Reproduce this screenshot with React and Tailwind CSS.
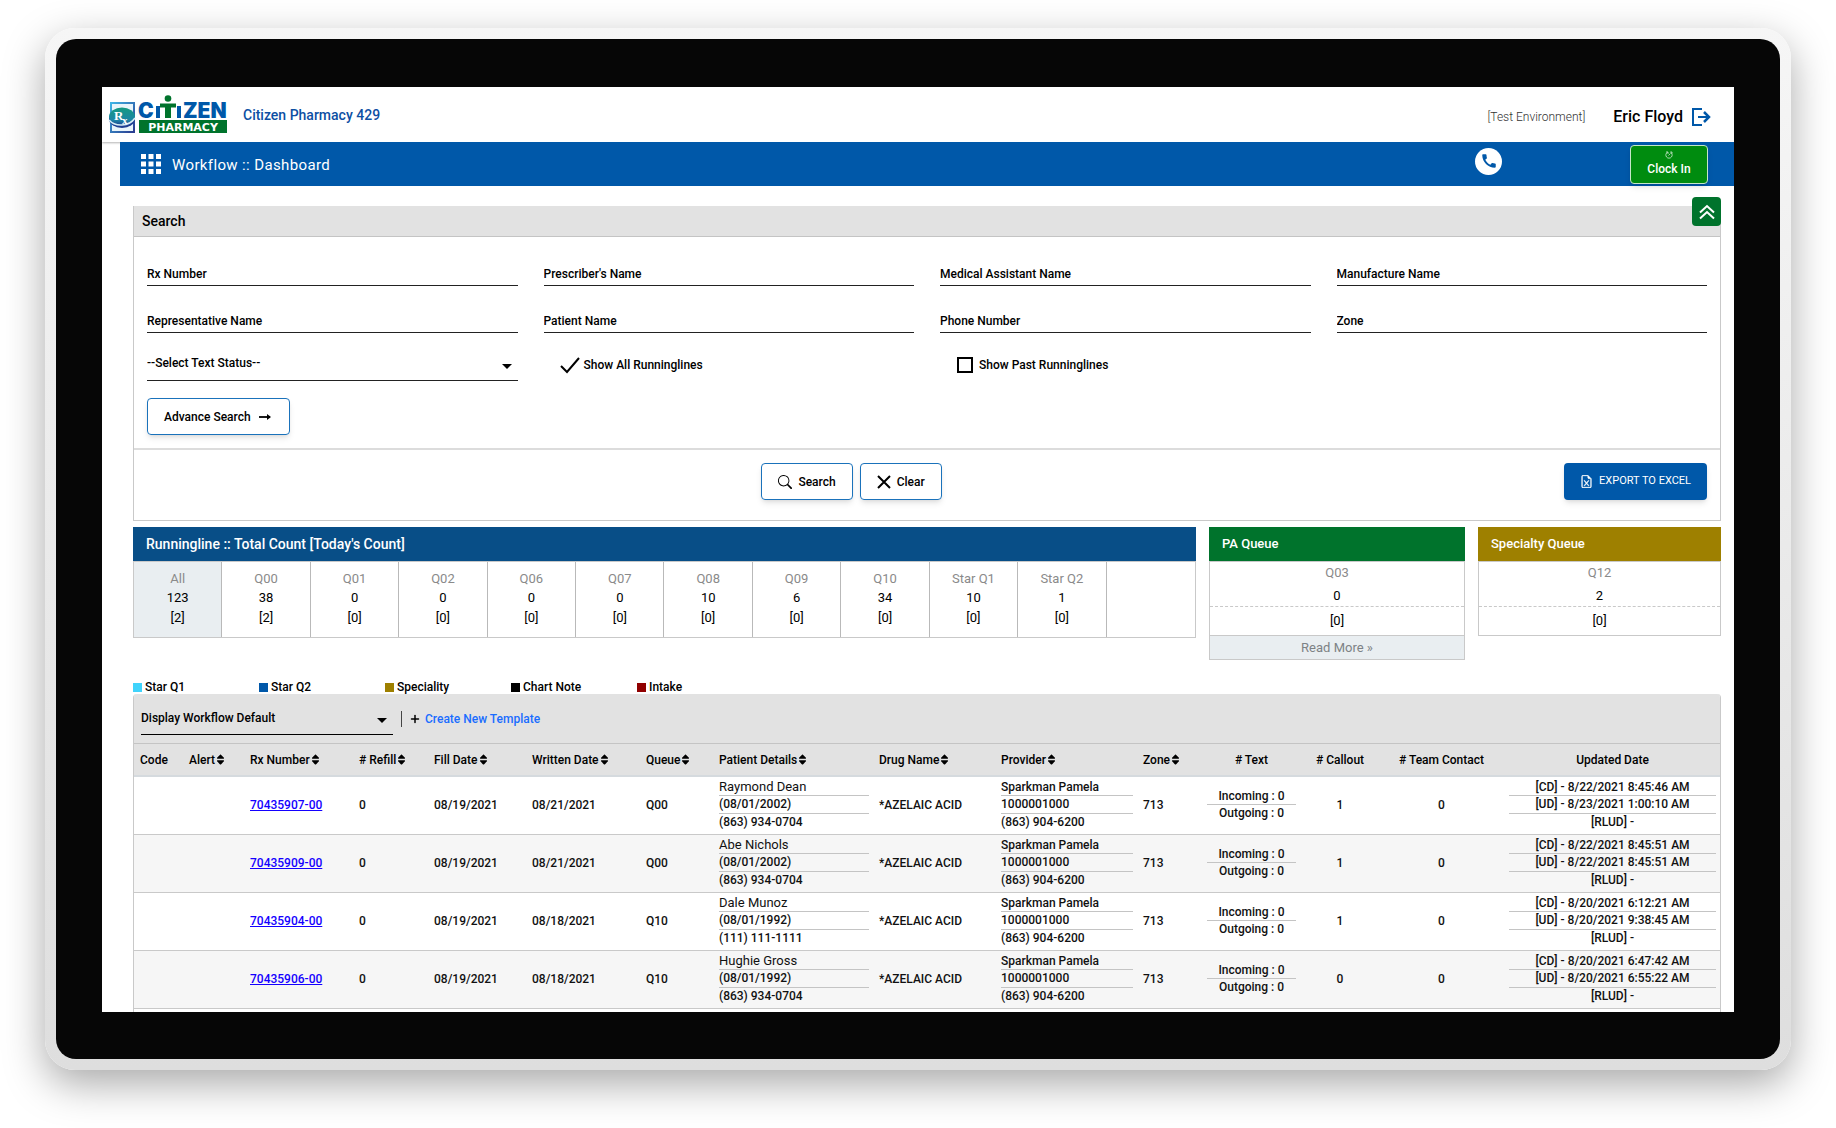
import React, { useState } from 'react';
import { FaSort } from 'react-icons/fa';
import { MdCall, MdApps } from 'react-icons/md';
import { Plus } from 'lucide-react';
import { BsFileEarmarkExcel, BsSearch } from 'react-icons/bs';

const FIELDS = [
  'Rx Number',
  "Prescriber's Name",
  'Medical Assistant Name',
  'Manufacture Name',
  'Representative Name',
  'Patient Name',
  'Phone Number',
  'Zone',
];

const QUEUES = [
  { name: 'All', total: 123, today: 2, active: true },
  { name: 'Q00', total: 38, today: 2 },
  { name: 'Q01', total: 0, today: 0 },
  { name: 'Q02', total: 0, today: 0 },
  { name: 'Q06', total: 0, today: 0 },
  { name: 'Q07', total: 0, today: 0 },
  { name: 'Q08', total: 10, today: 0 },
  { name: 'Q09', total: 6, today: 0 },
  { name: 'Q10', total: 34, today: 0 },
  { name: 'Star Q1', total: 10, today: 0 },
  { name: 'Star Q2', total: 1, today: 0 },
];

const LEGEND = [
  { label: 'Star Q1', color: 'bg-[#40d3fb]' },
  { label: 'Star Q2', color: 'bg-[#0058a9]' },
  { label: 'Speciality', color: 'bg-[#9e8000]' },
  { label: 'Chart Note', color: 'bg-black' },
  { label: 'Intake', color: 'bg-[#900000]' },
];

const COLUMNS = [
  { label: 'Code', width: 'w-[49px]' },
  { label: 'Alert', width: 'w-[61px]', sortable: true },
  { label: 'Rx Number', width: 'w-[109px]', sortable: true },
  { label: '# Refill', width: 'w-[75px]', sortable: true },
  { label: 'Fill Date', width: 'w-[98px]', sortable: true },
  { label: 'Written Date', width: 'w-[114px]', sortable: true },
  { label: 'Queue', width: 'w-[73px]', sortable: true },
  { label: 'Patient Details', width: 'w-[160px]', sortable: true },
  { label: 'Drug Name', width: 'w-[122px]', sortable: true },
  { label: 'Provider', width: 'w-[142px]', sortable: true },
  { label: 'Zone', width: 'w-[64px]', sortable: true },
  { label: '# Text', width: 'w-[99px]', center: true },
  { label: '# Callout', width: 'w-[78px]', center: true },
  { label: '# Team Contact', width: 'w-[125px]', center: true },
  { label: 'Updated Date', width: 'w-[217px]', center: true },
];

const ROWS = [
  {
    rx: '70435907-00', written: '08/21/2021', queue: 'Q00', callout: 1,
    patient: ['Raymond Dean', '(08/01/2002)', '(863) 934-0704'],
    updated: ['[CD] - 8/22/2021 8:45:46 AM', '[UD] - 8/23/2021 1:00:10 AM', '[RLUD] -'],
  },
  {
    rx: '70435909-00', written: '08/21/2021', queue: 'Q00', callout: 1,
    patient: ['Abe Nichols', '(08/01/2002)', '(863) 934-0704'],
    updated: ['[CD] - 8/22/2021 8:45:51 AM', '[UD] - 8/22/2021 8:45:51 AM', '[RLUD] -'],
  },
  {
    rx: '70435904-00', written: '08/18/2021', queue: 'Q10', callout: 1,
    patient: ['Dale Munoz', '(08/01/1992)', '(111) 111-1111'],
    updated: ['[CD] - 8/20/2021 6:12:21 AM', '[UD] - 8/20/2021 9:38:45 AM', '[RLUD] -'],
  },
  {
    rx: '70435906-00', written: '08/18/2021', queue: 'Q10', callout: 0,
    patient: ['Hughie Gross', '(08/01/1992)', '(863) 934-0704'],
    updated: ['[CD] - 8/20/2021 6:47:42 AM', '[UD] - 8/20/2021 6:55:22 AM', '[RLUD] -'],
  },
];

const PROVIDER = ['Sparkman Pamela', '1000001000', '(863) 904-6200'];

const Logo = () => (
  <svg width="120" height="48" viewBox="0 0 120 48" role="img" aria-label="Citizen Pharmacy">
    <defs>
      <linearGradient id="frame" x1="0" y1="0" x2="1" y2="1">
        <stop offset="0" stopColor="#3fb4e6" />
        <stop offset="1" stopColor="#2a3c8f" />
      </linearGradient>
      <linearGradient id="globe" x1="0" y1="0" x2="0" y2="1">
        <stop offset="0" stopColor="#159a80" />
        <stop offset="0.7" stopColor="#1c86a6" />
        <stop offset="1" stopColor="#1c3f90" />
      </linearGradient>
    </defs>
    <rect x="3" y="12" width="23" height="29" fill="#e9f5fb" stroke="url(#frame)" strokeWidth="2" />
    <ellipse cx="14" cy="28" rx="13" ry="9" fill="#1f3f92" />
    <ellipse cx="14" cy="25.500" rx="13" ry="9" fill="url(#globe)" />
    <path d="M1 29c6 7 20 7 26-2" fill="none" stroke="#d7eef6" strokeWidth="1.500" />
    <text x="6" y="29" className="fill-white font-[Liberation_Serif] text-[13px] font-bold">R</text>
    <text x="14" y="33" className="fill-white font-[Liberation_Serif] text-[11px] font-bold">x</text>
    <g className="fill-[#0058a9] font-[Inter] text-[21px] font-black">
      <text x="30" y="27">C</text>
      <rect x="48" y="15" width="4" height="12" />
      <rect x="69" y="15" width="4" height="12" />
      <text x="75" y="27">ZEN</text>
    </g>
    <path d="M52 12.500h16v4h-5v10.500h-6v-10.500h-5z" fill="#00732c" />
    <circle cx="60" cy="7.500" r="3.300" fill="#00732c" />
    <rect x="31" y="29" width="88" height="13" fill="#00732c" />
    <text x="75" y="39.500" textAnchor="middle" className="fill-white font-[DejaVu_Sans] text-[11px] font-bold">PHARMACY</text>
  </svg>
);

const Clock = () => (
  <svg className="h-2 w-2" viewBox="0 0 16 16" fill="none" stroke="currentColor" strokeWidth="1.300">
    <path d="M5 2.500a6.300 6.300 0 1 0 6 0M7 9l4-4M2 2h4v4M11 2h3v3" />
  </svg>
);

const CheckMark = ({ checked }) =>
  checked ? (
    <svg className="h-5 w-5" viewBox="0 0 20 20" fill="none" stroke="currentColor" strokeWidth="2">
      <path d="M1 11l6 6L19 3" />
    </svg>
  ) : (
    <span className="mr-[2px] h-4 w-4 border-2 border-black" />
  );

const Caret = () => (
  <span className="pointer-events-none absolute top-4 right-[6px] border-x-5 border-t-5 border-x-transparent border-t-black" />
);

const Lines = ({ items, firstClass = '' }) => (
  <div className="divide-y divide-[#c4c4c4]">
    {items.map((item, i) => (
      <div key={i} className={i === 0 ? `h-[17px] leading-4 ${firstClass}` : 'h-[18px] leading-[17px]'}>
        {item}
      </div>
    ))}
  </div>
);

const SideQueue = ({ title, color, name, total, today, more }) => (
  <section className="text-center">
    <h2 className={`h-[34px] px-[13px] text-left text-[13px] leading-[34px] font-medium text-white ${color}`}>{title}</h2>
    <div className="border border-[#c9c9c9] text-[13px]">
      <div className="h-[22px] leading-[22px] text-[#8a8a8a]">{name}</div>
      <div className="h-[23px] border-b border-dashed border-[#c9c9c9] leading-[23px]">{total}</div>
      <div className="h-[28px] leading-[28px]">[{today}]</div>
      {more && (
        <button type="button" className="block h-6 w-full border-t border-[#c9c9c9] bg-[#e9eef1] leading-[20px] text-[#7d8285]">
          Read More »
        </button>
      )}
    </div>
  </section>
);

const App = () => {
  const [showAll, setShowAll] = useState(true);
  const [showPast, setShowPast] = useState(false);

  return (
    <div className="flex h-screen bg-white px-[45px] pt-7 pb-[58px] font-[Roboto,sans-serif] text-black">
      {/* Tablet frame */}
      <div className="flex min-w-0 flex-1 rounded-[30px] bg-linear-to-b from-[#f6f6f6] to-[#dedede] p-[11px] shadow-[0_14px_40px_rgba(0,0,0,0.34)]">
        <div className="flex min-w-0 flex-1 rounded-[20px] bg-[#060606] px-[46px] pt-12 pb-[47px]">
          <div className="flex min-w-0 flex-1 flex-col overflow-hidden bg-white">
            {/* Top bar */}
            <header className="flex h-[55px] shrink-0 items-center pr-[23px] pl-[6px] shadow-[0_1px_2px_rgba(0,0,0,0.3)]">
              <Logo />
              <span className="ml-[15px] text-sm font-medium text-[#0d4fa3]">Citizen Pharmacy 429</span>
              <div className="ml-auto flex items-center pt-1">
                <span className="text-xs font-light text-[#333]">[Test Environment]</span>
                <span className="ml-7 text-base font-medium">Eric Floyd</span>
                <button type="button" aria-label="Log out" className="ml-2 text-[#0058a9]">
                  <svg className="h-5 w-5" viewBox="0 0 20 20" fill="none" stroke="currentColor" strokeWidth="2">
                    <path d="M11 2H2v16h9M7 10h11" />
                    <path d="M13 5l5 5-5 5" strokeWidth="2.500" />
                  </svg>
                </button>
              </div>
            </header>

            <nav className="ml-[18px] flex h-11 shrink-0 items-center bg-[#0058a9] pr-[26px] pl-4 text-white">
              <button type="button" aria-label="Menu">
                <MdApps className="h-[30px] w-[30px]" />
              </button>
              <h1 className="ml-[6px] pt-[2px] text-[15px] tracking-wide">Workflow :: Dashboard</h1>
              <button type="button" aria-label="Call" className="mr-32 mb-[6px] ml-auto flex h-[27px] w-[27px] items-center justify-center rounded-full bg-white text-[#0058a9]">
                <MdCall className="h-[18px] w-[18px]" />
              </button>
              <button type="button" className="flex h-[39px] w-[78px] flex-col items-center justify-center gap-[2px] rounded border border-[#c5e6c8] bg-[#008c0f] text-xs font-medium shadow-md">
                <Clock />
                Clock In
              </button>
            </nav>

            <main className="flex min-h-0 flex-1 flex-col pt-5 pr-[13px] pl-[31px]">
              {/* Search panel */}
              <form className="shrink-0 border border-t-0 border-[#c9c9c9] text-xs font-medium" onSubmit={(e) => e.preventDefault()}>
                <div className="relative flex h-[31px] items-center border-b border-[#c4c4c4] bg-[#e2e2e2] px-2 text-sm">
                  <h2>Search</h2>
                  <button type="button" aria-label="Collapse" className="absolute -top-[9px] -right-px flex h-[29px] w-[29px] items-center justify-center rounded bg-[#00732c] text-white">
                    <svg className="h-4 w-4" viewBox="0 0 16 16" fill="none" stroke="currentColor" strokeWidth="2">
                      <path d="M1 8.500l7-6.500 7 6.500M1 14.500l7-6.500 7 6.500" />
                    </svg>
                  </button>
                </div>

                <div className="grid grid-cols-4 gap-x-[26px] px-[13px] pt-[17px]">
                  {FIELDS.map((label) => (
                    <input
                      key={label}
                      type="text"
                      aria-label={label}
                      placeholder={label}
                      className="mb-[15px] h-8 border-b border-[#222] pt-2 placeholder:text-black focus:outline-none"
                    />
                  ))}
                  <div className="relative border-b border-[#222]">
                    <select aria-label="Text status" className="h-8 w-full appearance-none pb-[2px] focus:outline-none">
                      <option>--Select Text Status--</option>
                    </select>
                    <Caret />
                  </div>
                  <label className="relative flex items-center gap-1 pl-4">
                    <input type="checkbox" className="sr-only" checked={showAll} onChange={() => setShowAll(!showAll)} />
                    <CheckMark checked={showAll} />
                    Show All Runninglines
                  </label>
                  <label className="relative flex items-center gap-1 pl-[17px]">
                    <input type="checkbox" className="sr-only" checked={showPast} onChange={() => setShowPast(!showPast)} />
                    <CheckMark checked={showPast} />
                    Show Past Runninglines
                  </label>
                </div>

                <div className="border-b-2 border-[#dcdcdc] px-[13px] pt-[17px] pb-[13px]">
                  <button type="button" className="flex h-[37px] items-center gap-[6px] rounded border border-[#1a72bb] px-4 shadow-md">
                    Advance Search
                    <svg className="h-3 w-4" viewBox="0 0 16 12" fill="none" stroke="currentColor" strokeWidth="1.800">
                      <path d="M2 6h11" />
                      <path d="M10 3l4 3-4 3z" fill="currentColor" strokeWidth="0" />
                    </svg>
                  </button>
                </div>

                <div className="flex px-[13px] pt-[13px] pb-5">
                  <div className="flex flex-1 justify-center gap-[7px] pr-2">
                    <button type="submit" className="flex h-[37px] items-center gap-[6px] rounded border border-[#1a72bb] px-4 shadow-md">
                      <BsSearch className="h-[14px] w-[14px]" />
                      Search
                    </button>
                    <button type="reset" className="flex h-[37px] items-center gap-[6px] rounded border border-[#1a72bb] px-4 shadow-md">
                      <svg className="h-[14px] w-[14px]" viewBox="0 0 14 14" fill="none" stroke="currentColor" strokeWidth="2">
                        <path d="M1 1l12 12M13 1L1 13" />
                      </svg>
                      Clear
                    </button>
                  </div>
                  <button type="button" className="flex h-[37px] items-center gap-[6px] rounded bg-[#0058a9] px-4 text-[11px] font-normal text-white shadow-md">
                    <BsFileEarmarkExcel className="h-[13px] w-[13px] stroke-[0.5]" />
                    EXPORT TO EXCEL
                  </button>
                </div>
              </form>

              {/* Queue counters */}
              <div className="mt-[6px] grid h-[154px] shrink-0 grid-cols-[1063fr_256fr_243fr] items-start gap-x-[13px]">
                <section>
                  <h2 className="h-[34px] bg-[#084e87] px-[13px] text-sm leading-[34px] font-medium text-white">
                    Runningline :: Total Count [Today's Count]
                  </h2>
                  <div className="grid h-[77px] grid-cols-12 divide-x divide-[#b9b9b9] border border-[#c9c9c9] text-center text-[13px]">
                    {QUEUES.map((q) => (
                      <div key={q.name} className={q.active ? 'bg-[#e9eef1] pt-2' : 'pt-2'}>
                        <div className="leading-[18px] text-[#8a8a8a]">{q.name}</div>
                        <div className="leading-[19px]">{q.total}</div>
                        <div className="leading-[22px]">[{q.today}]</div>
                      </div>
                    ))}
                    <div />
                  </div>
                </section>
                <SideQueue title="PA Queue" color="bg-[#00732c]" name="Q03" total={0} today={0} more />
                <SideQueue title="Specialty Queue" color="bg-[#9e8000]" name="Q12" total={2} today={0} />
              </div>

              <ul className="flex h-[13px] shrink-0 items-start text-xs font-medium">
                {LEGEND.map((item) => (
                  <li key={item.label} className="flex w-[126px] items-center gap-[3px] leading-3">
                    <span className={`h-[9px] w-[9px] ${item.color}`} />
                    {item.label}
                  </li>
                ))}
              </ul>

              {/* Workflow grid */}
              <section className="min-h-0 flex-1 overflow-hidden rounded-t border-x border-[#c9c9c9] text-xs font-medium">
                <div className="flex h-[50px] items-center border-b border-[#c4c4c4] bg-[#e2e2e2] px-[7px]">
                  <div className="relative w-[252px] border-b border-black">
                    <select aria-label="Template" className="h-8 w-full appearance-none focus:outline-none">
                      <option>Display Workflow Default</option>
                    </select>
                    <Caret />
                  </div>
                  <a href="#template" className="ml-2 flex h-4 items-center gap-1 border-l border-[#444] pl-[7px] text-[#1a6dff]">
                    <Plus className="h-3 w-3 text-black" strokeWidth={3} />
                    Create New Template
                  </a>
                </div>
                <table className="w-full table-fixed text-left">
                  <thead>
                    <tr className="h-8 border-b-2 border-[#d5dade] bg-[#e2e2e2]">
                      {COLUMNS.map((col) => (
                        <th key={col.label} className={`pr-1 pl-[6px] font-medium whitespace-nowrap ${col.width} ${col.center ? 'text-center' : ''}`}>
                          {col.label}
                          {col.sortable && <FaSort className="ml-px inline h-[13px] w-[9px] align-[-2px]" />}
                        </th>
                      ))}
                    </tr>
                  </thead>
                  <tbody>
                    {ROWS.map((row) => (
                      <tr key={row.rx} className="h-[58px] border-b border-[#c9c9c9] text-[#111] even:bg-[#f6f6f6] [&>td]:pr-1 [&>td]:pl-[6px]">
                        <td />
                        <td />
                        <td>
                          <a href={`#${row.rx}`} className="text-[#1400ff] underline">{row.rx}</a>
                        </td>
                        <td>0</td>
                        <td>08/19/2021</td>
                        <td>{row.written}</td>
                        <td>{row.queue}</td>
                        <td><Lines items={row.patient} firstClass="text-[13px] font-normal" /></td>
                        <td>*AZELAIC ACID</td>
                        <td><Lines items={PROVIDER} /></td>
                        <td>713</td>
                        <td className="text-center"><Lines items={['Incoming : 0', 'Outgoing : 0']} /></td>
                        <td className="text-center">{row.callout}</td>
                        <td className="text-center">0</td>
                        <td className="text-center"><Lines items={row.updated} /></td>
                      </tr>
                    ))}
                  </tbody>
                </table>
              </section>
            </main>
          </div>
        </div>
      </div>
    </div>
  );
};

export default App;
